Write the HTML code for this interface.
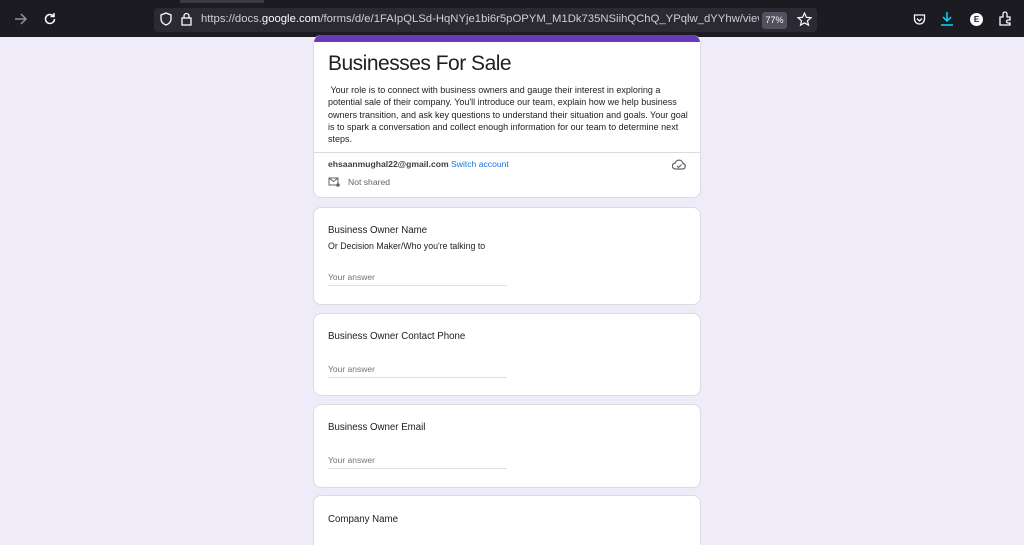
<!DOCTYPE html>
<html style="overflow:hidden;height:545px"><head><style>
*{margin:0;padding:0;box-sizing:border-box}
body{width:1024px;height:545px;overflow:hidden;background:#f0ebf8;font-family:"Liberation Sans",Arial,sans-serif;position:relative}
.bar{position:absolute;left:0;top:0;width:1024px;height:37px;background:#1c1b22}
.url{position:absolute;left:154px;top:8px;width:663px;height:24px;background:#2b2a33;border-radius:4px}
.urltext{position:absolute;left:201px;top:13px;font-size:11.3px;color:#cfcfd8;white-space:nowrap;width:558px;overflow:hidden}
.urltext b{color:#fbfbfe;font-weight:normal}
.zoom{position:absolute;left:762px;top:12px;width:25px;height:17px;background:#52525e;border-radius:3px;color:#fbfbfe;font-size:9px;line-height:17px;text-align:center}
.card{position:absolute;left:313px;width:388px;background:#fff;border-radius:8px;border:1px solid #dadce0;overflow:hidden}
.q{position:absolute;left:14px;font-size:9.7px;color:#202124}
.ans{position:absolute;left:14px;width:179px;border-bottom:1px solid #e0e0e0;font-size:8.5px;color:#70757a;padding-bottom:3px}
svg{position:absolute}
</style></head><body>
<div class="bar"></div>
<div style="position:absolute;left:180px;top:0;width:84px;height:3px;background:#3a3944"></div>
<svg style="left:14px;top:13px" width="14" height="12" viewBox="0 0 14 12"><path d="M1 6h11M7 1l5 5-5 5" stroke="#8f8f9d" stroke-width="1.5" fill="none"/></svg>
<svg style="left:43px;top:12px" width="14" height="14" viewBox="0 0 14 14"><path d="M11.5 7a4.5 4.5 0 1 1-1.3-3.2M11 1v3.5H7.5" stroke="#fbfbfe" stroke-width="1.5" fill="none"/></svg>
<div class="url"></div>
<svg style="left:160px;top:12px" width="12" height="14" viewBox="0 0 12 14"><path d="M6 1L1 3v4c0 3 2.5 5 5 6 2.5-1 5-3 5-6V3z" stroke="#fbfbfe" stroke-width="1.3" fill="none"/></svg>
<svg style="left:181px;top:12px" width="11" height="14" viewBox="0 0 11 14"><rect x="1" y="6" width="9" height="7" stroke="#fbfbfe" fill="none" stroke-width="1.3"/><path d="M3 6V4a2.5 2.5 0 0 1 5 0v2" stroke="#fbfbfe" stroke-width="1.3" fill="none"/></svg>
<div class="urltext">https://docs.<b>google.com</b>/forms/d/e/1FAIpQLSd-HqNYje1bi6r5pOPYM_M1Dk735NSiihQChQ_YPqlw_dYYhw/viewform</div>
<div class="zoom">77%</div>
<svg style="left:797px;top:12px" width="15" height="15" viewBox="0 0 15 15"><path d="M7.5 1l1.9 4.3 4.6.4-3.5 3 1 4.5-4-2.4-4 2.4 1-4.5-3.5-3 4.6-.4z" stroke="#fbfbfe" stroke-width="1.2" fill="none"/></svg>
<svg style="left:913px;top:13px" width="13" height="13" viewBox="0 0 13 13"><path d="M1.5 2h10v4a5 5 0 0 1-10 0z" stroke="#fbfbfe" stroke-width="1.3" fill="none"/><path d="M4 5.5l2.5 2.5 2.5-2.5" stroke="#fbfbfe" stroke-width="1.3" fill="none"/></svg>
<svg style="left:940px;top:11px" width="14" height="16" viewBox="0 0 14 16"><path d="M7 1v9M3 6l4 4 4-4M1 14h12" stroke="#00ddff" stroke-width="1.5" fill="none"/></svg>
<div style="position:absolute;left:970px;top:13px;width:13px;height:13px;border-radius:50%;background:#fbfbfe;color:#1c1b22;font-size:8px;font-weight:bold;text-align:center;line-height:13px">E</div>
<svg style="left:998px;top:11px" width="14" height="15" viewBox="0 0 14 15"><path d="M2 14V6h3V3a2 2 0 0 1 4 0v3h3v3h-2a1.5 1.5 0 0 0 0 3h2v2z" stroke="#fbfbfe" stroke-width="1.3" fill="none"/></svg>

<div class="card" style="top:35px;height:163px;border-top:none">
<div style="height:7px;background:#673ab7"></div>
<div style="position:absolute;left:14px;top:17px;font-size:21px;letter-spacing:-0.5px;color:#202124">Businesses For Sale</div>
<div style="position:absolute;left:14px;top:49px;width:362px;font-size:9px;line-height:12.3px;color:#202124">&nbsp;Your role is to connect with business owners and gauge their interest in exploring a potential sale of their company. You'll introduce our team, explain how we help business owners transition, and ask key questions to understand their situation and goals. Your goal is to spark a conversation and collect enough information for our team to determine next steps.</div>
<div style="position:absolute;left:0;top:117px;width:388px;border-top:1px solid #dadce0"></div>
<div style="position:absolute;left:14px;top:124px;font-size:8.6px;color:#3c4043;font-weight:bold">ehsaanmughal22@gmail.com <span style="color:#1a73e8;font-weight:normal">Switch account</span></div>
<svg style="left:358px;top:124px" width="14" height="11" viewBox="0 0 14 11"><path d="M3.5 10a3 3 0 0 1-.3-6A4 4 0 0 1 11 4.5a2.8 2.8 0 0 1 0 5.5z" stroke="#5f6368" stroke-width="1.2" fill="none"/><path d="M5 7l1.5 1.5L9.5 5.5" stroke="#5f6368" stroke-width="1.1" fill="none"/></svg>
<svg style="left:14px;top:142px" width="12" height="10" viewBox="0 0 12 10"><rect x="1" y="1" width="9" height="7" stroke="#5f6368" fill="none"/><path d="M1 1l4.5 3.5L10 1" stroke="#5f6368" fill="none"/><circle cx="10" cy="8" r="1.8" fill="#5f6368"/></svg>
<div style="position:absolute;left:34px;top:142px;font-size:8.6px;color:#5f6368">Not shared</div>
</div>

<div class="card" style="top:207px;height:98px">
<div class="q" style="top:17px">Business Owner Name</div>
<div style="position:absolute;left:14px;top:33px;font-size:8.8px;color:#202124">Or Decision Maker/Who you're talking to</div>
<div class="ans" style="top:64px">Your answer</div>
</div>
<div class="card" style="top:313px;height:83px">
<div class="q" style="top:17px">Business Owner Contact Phone</div>
<div class="ans" style="top:50px">Your answer</div>
</div>
<div class="card" style="top:404px;height:84px">
<div class="q" style="top:17px">Business Owner Email</div>
<div class="ans" style="top:50px">Your answer</div>
</div>
<div class="card" style="top:495px;height:50px;border-bottom:none;border-radius:8px 8px 0 0">
<div class="q" style="top:18px">Company Name</div>
</div>
</body></html>
